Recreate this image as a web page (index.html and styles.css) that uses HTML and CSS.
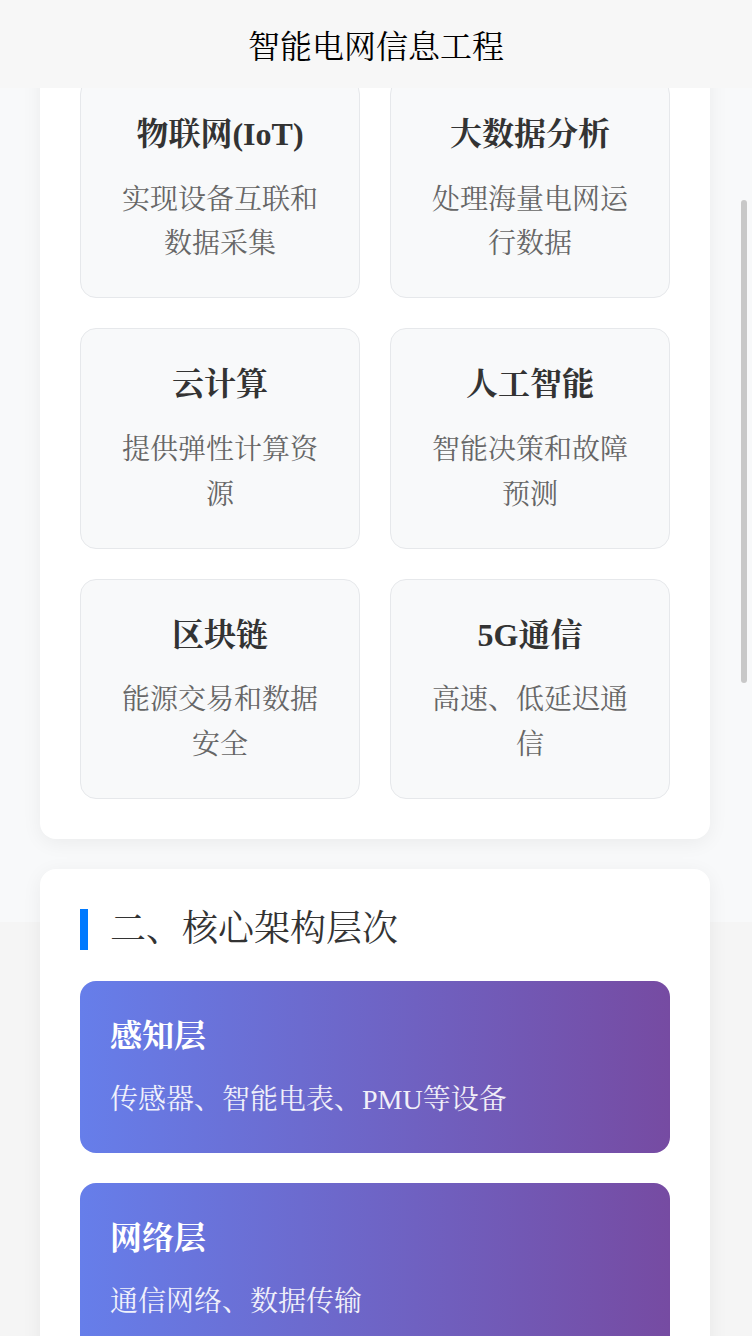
FILE: index.html
```html
<!DOCTYPE html>
<html lang="zh-CN">
<head>
  <meta charset="UTF-8" />
  <title>智能电网信息工程</title>
  <link rel="stylesheet" href="styles.css">
</head>

<body>
  <!-- top nav bar -->
  <div class="nav-bar">
    <div class="nav-title">智能电网信息工程</div>
  </div>

  <div class="content">
    <!-- key technologies -->
    <div class="section">
      <div class="tech-grid">
        <div class="tech-item">
          <div class="tech-name">物联网(IoT)</div>
          <div class="tech-desc">实现设备互联和数据采集</div>
        </div>
        <div class="tech-item">
          <div class="tech-name">大数据分析</div>
          <div class="tech-desc">处理海量电网运行数据</div>
        </div>
        <div class="tech-item">
          <div class="tech-name">云计算</div>
          <div class="tech-desc">提供弹性计算资源</div>
        </div>
        <div class="tech-item">
          <div class="tech-name">人工智能</div>
          <div class="tech-desc">智能决策和故障预测</div>
        </div>
        <div class="tech-item">
          <div class="tech-name">区块链</div>
          <div class="tech-desc">能源交易和数据安全</div>
        </div>
        <div class="tech-item">
          <div class="tech-name">5G通信</div>
          <div class="tech-desc">高速、低延迟通信</div>
        </div>
      </div>
    </div>

    <!-- architecture layers -->
    <div class="section">
      <h2 class="section-title">二、核心架构层次</h2>
      <div class="layer-list">
        <div class="layer-item">
          <div class="layer-name">感知层</div>
          <div class="layer-desc">传感器、智能电表、PMU等设备</div>
        </div>
        <div class="layer-item">
          <div class="layer-name">网络层</div>
          <div class="layer-desc">通信网络、数据传输</div>
        </div>
      </div>
    </div>
  </div>

  <!-- scrollbar thumb -->
  <div class="scroll-thumb"></div>
</body>
</html>
```

FILE: styles.css
```css
body {
  margin: 0;
  padding: 0;
  background: linear-gradient(to bottom, #f8f9fa 922px, #f5f5f5 922px);
  font-family: "Liberation Serif", "Noto Serif CJK SC", serif;
  color: #333;
}

/* nav */
.nav-bar {
  position: fixed;
  top: 0;
  left: 0;
  right: 0;
  height: 88px;
  display: flex;
  align-items: center;
  justify-content: center;
  background-color: #f7f7f7;
  z-index: 10;
}
.nav-title {
  font-size: 32px;
  color: #000;
}

/* page content */
.content {
  width: 750px;
  box-sizing: border-box;
  display: flex;
  flex-direction: column;
  gap: 30px;
  padding: 38px 40px 40px;
}

.section {
  background-color: #fff;
  border-radius: 16px;
  padding: 40px;
  box-shadow: 0 4px 20px rgba(0, 0, 0, 0.06);
}

.section-title {
  margin: 0 0 31px;
  padding-left: 22px;
  border-left: 8px solid #007aff;
  font-size: 36px;
  font-weight: normal;
  line-height: 41px;
  color: #333;
}

/* tech cards */
.tech-grid {
  display: grid;
  grid-template-columns: repeat(2, 1fr);
  gap: 30px;
}

.tech-item {
  background-color: #f8f9fa;
  border: 1px solid #e6e8eb;
  border-radius: 16px;
  padding: 30px;
  text-align: center;
}
.tech-name {
  font-size: 32px;
  font-weight: bold;
  line-height: 1.6;
  color: #333;
  margin-bottom: 17.5px;
}
.tech-desc {
  font-size: 28px;
  line-height: 1.6;
  color: #666;
}

/* layers */
.layer-list {
  display: flex;
  flex-direction: column;
  gap: 30px;
}

.layer-item {
  background: linear-gradient(to right, #667eea, #764ba2);
  border-radius: 16px;
  padding: 30px;
  color: #fff;
}
.layer-name {
  font-size: 32px;
  font-weight: bold;
  line-height: 1.6;
  margin-bottom: 16px;
}
.layer-desc {
  font-size: 28px;
  line-height: 1.6;
  opacity: 0.9;
}

.scroll-thumb {
  position: fixed;
  top: 200px;
  right: 5px;
  width: 6px;
  height: 483px;
  border-radius: 3px;
  background-color: #c8c8c8;
  z-index: 20;
}
```
